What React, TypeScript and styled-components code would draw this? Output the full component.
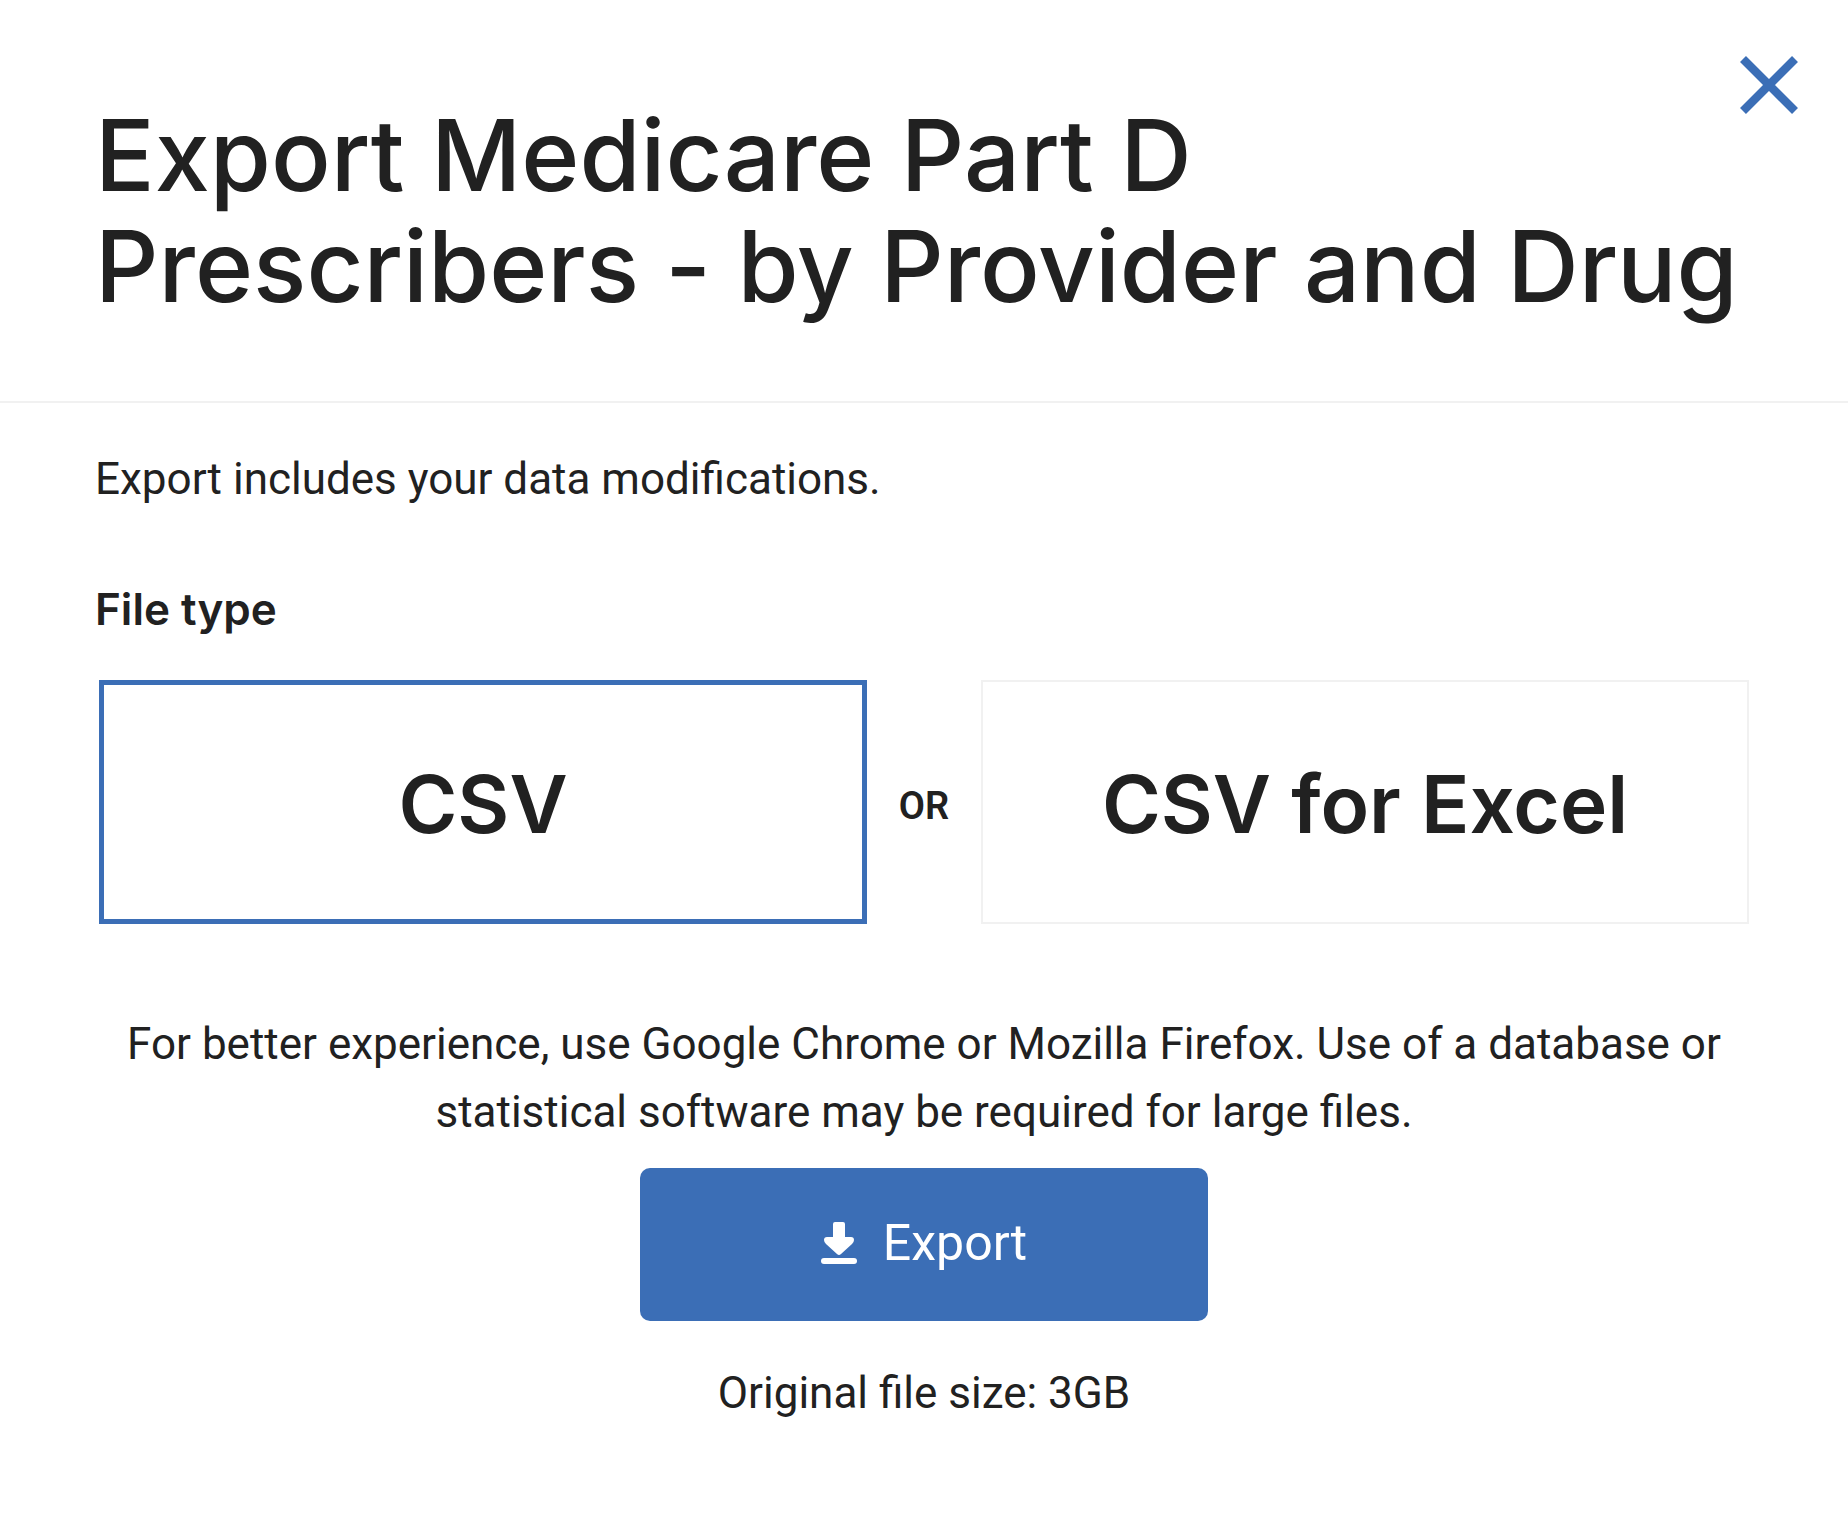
import React, { useState } from "react";
import styled, { createGlobalStyle } from "styled-components";

const blue = "#3b6eb6";
const ink = "#212121";
const line = "#f1f1f1";
const headingFont = '"Inter", "Open Sans", sans-serif';
const bodyFont = '"Roboto", "Liberation Sans", sans-serif';

const GlobalStyle = createGlobalStyle`
  *, *::before, *::after { box-sizing: border-box; }
  body {
    margin: 0;
    background: #ffffff;
    color: ${ink};
    font-family: ${bodyFont};
    font-size: 44px;
    line-height: 68px;
  }
`;

const Dialog = styled.main`
  position: relative;
  min-height: 100vh;
  background: #ffffff;
`;

const Header = styled.header`
  padding: 100px 84px 79px 95px;
  border-bottom: 2px solid ${line};
`;

const Title = styled.h1`
  margin: 0;
  font-family: ${headingFont};
  font-size: 99px;
  font-weight: 500;
  line-height: 111px;
`;

const CloseButton = styled.button`
  position: absolute;
  top: 56px;
  right: 50px;
  display: flex;
  padding: 0;
  border: 0;
  background: none;
  color: ${blue};
  cursor: pointer;
`;

const Body = styled.form`
  display: flex;
  flex-direction: column;
  padding: 42px 95px 80px;
`;

const Intro = styled.p`
  margin: 0;
`;

const FileTypes = styled.fieldset`
  min-width: 0;
  margin: 62px 0 0;
  padding: 0;
  border: 0;
`;

const Legend = styled.legend`
  padding: 0;
  font-family: ${headingFont};
  font-size: 44px;
  font-weight: 600;
  line-height: 68px;
`;

const Options = styled.div`
  display: grid;
  grid-template-columns: 1fr 114px 1fr;
  align-items: center;
  padding: 37px 4px 0;
`;

const Option = styled.label<{ $selected: boolean }>`
  position: relative;
  display: flex;
  align-items: center;
  justify-content: center;
  height: 244px;
  padding-top: 4px;
  border: ${(p) => (p.$selected ? `5px solid ${blue}` : `2px solid ${line}`)};
  font-family: ${headingFont};
  font-size: 80px;
  font-weight: 600;
  line-height: 96px;
  cursor: pointer;
`;

const OptionInput = styled.input`
  position: absolute;
  inset: 0;
  width: 100%;
  height: 100%;
  margin: 0;
  appearance: none;
  cursor: pointer;
`;

const Or = styled.span`
  padding-top: 8px;
  font-size: 38px;
  font-weight: 600;
  line-height: 48px;
  text-align: center;
`;

const Footer = styled.div`
  display: flex;
  flex-direction: column;
  align-items: center;
  padding-top: 86px;
  text-align: center;
`;

const Note = styled.p`
  margin: 0;
`;

const ExportButton = styled.button`
  display: flex;
  align-items: center;
  justify-content: center;
  gap: 26px;
  width: 568px;
  height: 153px;
  margin: 22px 0 38px;
  padding: 0 0 4px;
  border: 0;
  border-radius: 10px;
  background: ${blue};
  color: #ffffff;
  font-family: ${bodyFont};
  font-size: 50px;
  line-height: 68px;
  cursor: pointer;
`;

const fileTypes = ["CSV", "CSV for Excel"];

function CloseIcon() {
  return (
    <svg width="58" height="58" viewBox="0 0 58 58" aria-hidden="true">
      <path d="M3 3L55 55M55 3L3 55" stroke="currentColor" strokeWidth="8.4" />
    </svg>
  );
}

function DownloadIcon() {
  return (
    <svg width="36" height="42" viewBox="0 0 36 42" fill="currentColor" aria-hidden="true">
      <path d="M14 0H22Q24 0 24 2V15H30Q33 15 33 18Q33 20 31 22L20 32Q18 34 16 32L5 22Q3 20 3 18Q3 15 6 15H12V2Q12 0 14 0Z" />
      <rect y="36" width="36" height="6" rx="3" />
    </svg>
  );
}

export default function App() {
  const [selected, setSelected] = useState("CSV");

  const renderOption = (name: string) => (
    <Option $selected={selected === name}>
      <OptionInput
        type="radio"
        name="file-type"
        value={name}
        checked={selected === name}
        onChange={() => setSelected(name)}
      />
      {name}
    </Option>
  );

  return (
    <>
      <GlobalStyle />
      <Dialog>
        <Header>
          <Title>
            Export Medicare Part D<br />
            Prescribers - by Provider and Drug
          </Title>
          <CloseButton type="button" aria-label="Close">
            <CloseIcon />
          </CloseButton>
        </Header>
        <Body onSubmit={(e) => e.preventDefault()}>
          <Intro>Export includes your data modifications.</Intro>
          <FileTypes>
            <Legend>File type</Legend>
            <Options>
              {renderOption(fileTypes[0])}
              <Or>OR</Or>
              {renderOption(fileTypes[1])}
            </Options>
          </FileTypes>
          <Footer>
            <Note>
              For better experience, use Google Chrome or Mozilla Firefox. Use of a database or
              <br />
              statistical software may be required for large files.
            </Note>
            <ExportButton type="submit">
              <DownloadIcon />
              Export
            </ExportButton>
            <Note>Original file size: 3GB</Note>
          </Footer>
        </Body>
      </Dialog>
    </>
  );
}
